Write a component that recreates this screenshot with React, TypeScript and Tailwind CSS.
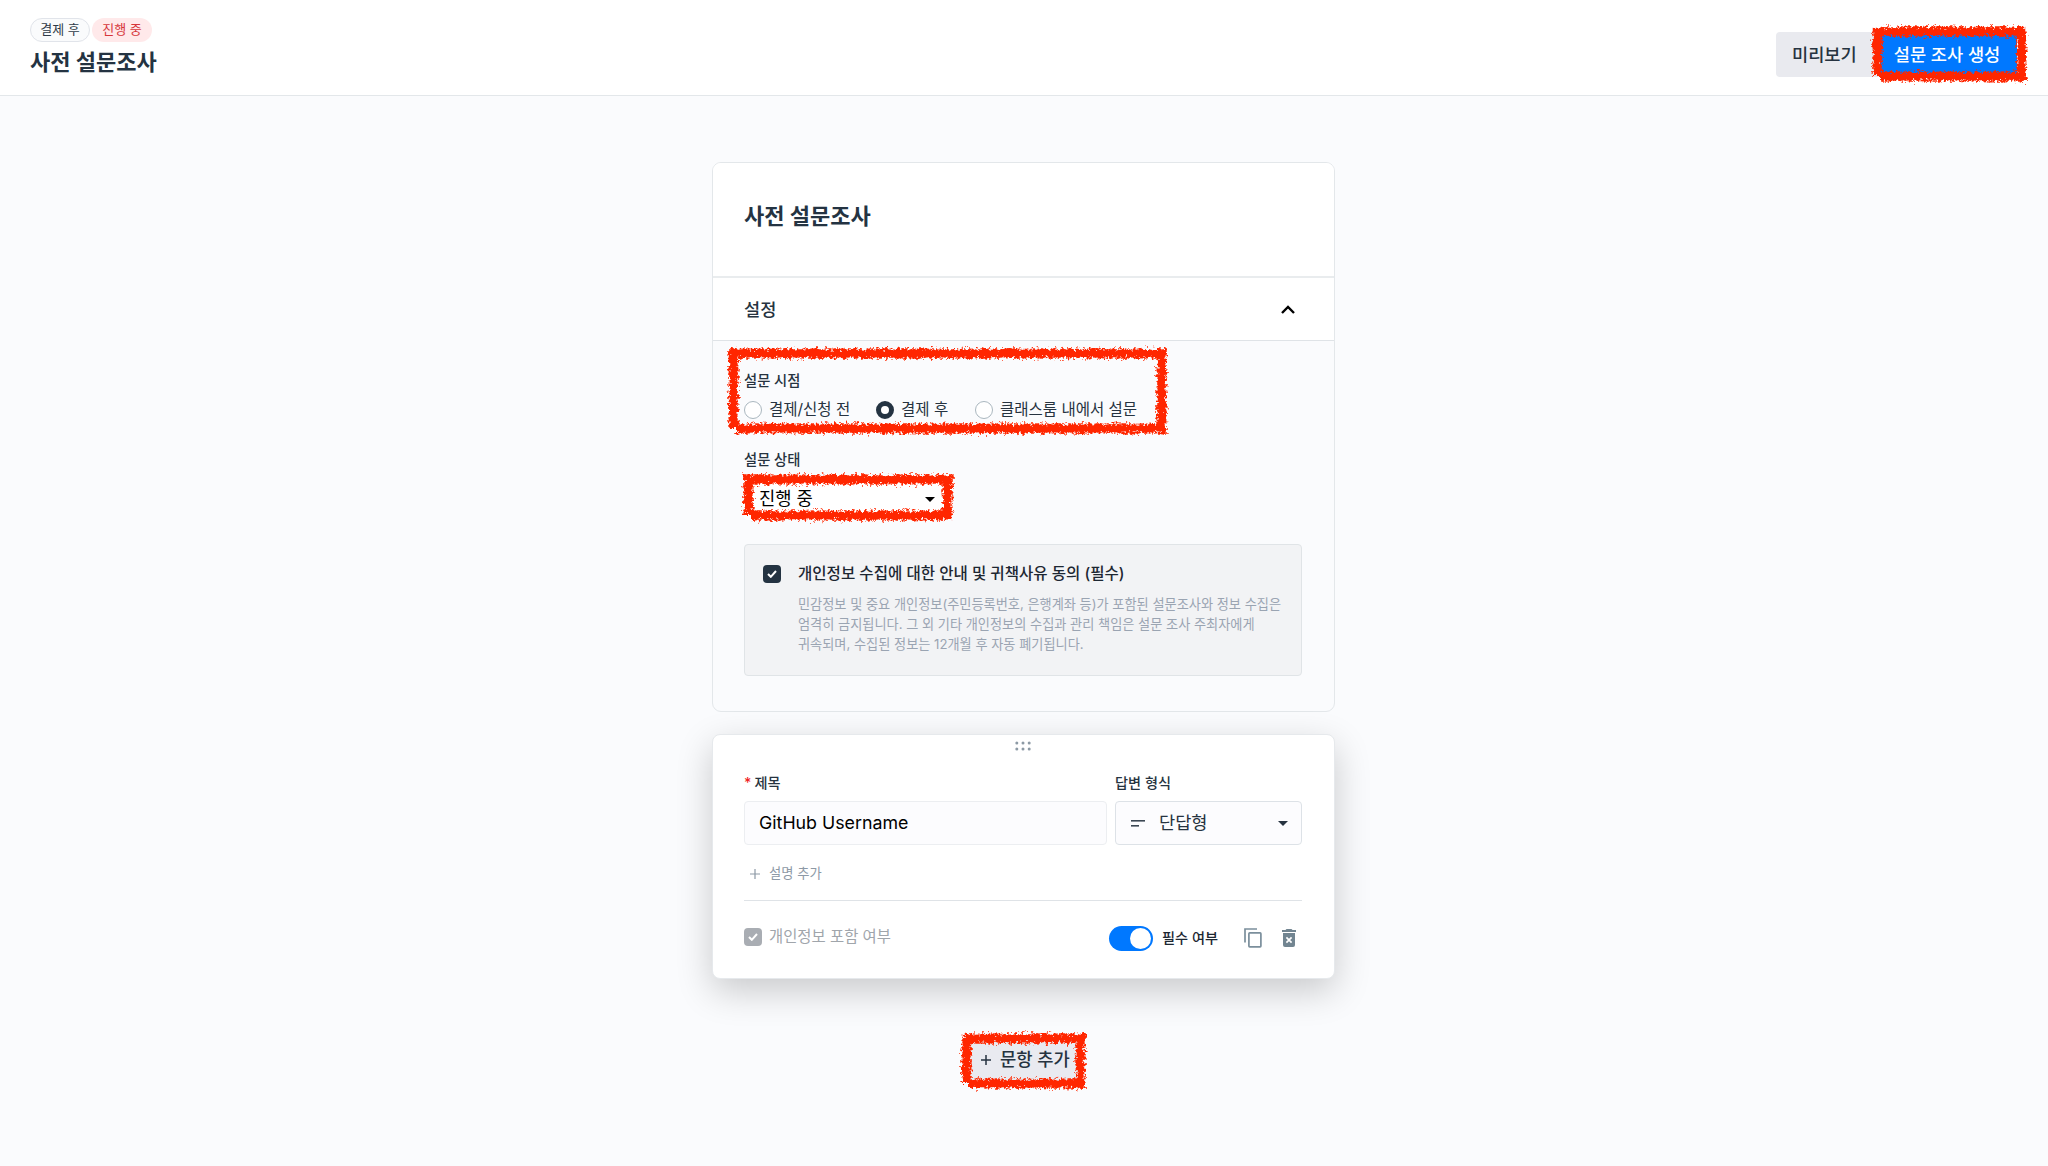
import type { ReactNode } from "react";
import clsx from "clsx";

type MarkerFrameProps = {
  width: number;
  height: number;
  seed: number;
  className: string;
};

// Hand-drawn red marker outline around a highlighted control
function MarkerFrame({ width, height, seed, className }: MarkerFrameProps) {
  const id = `marker-${seed}`;
  const r = width - 5.5;
  const b = height - 5.5;
  return (
    <svg
      width={width}
      height={height}
      viewBox={`0 0 ${width} ${height}`}
      className={clsx("pointer-events-none absolute max-w-none overflow-visible", className)}
      fill="none"
    >
      <filter id={id} x="-20" y="-20" width={width + 40} height={height + 40} filterUnits="userSpaceOnUse">
        <feTurbulence type="fractalNoise" baseFrequency="0.33" numOctaves="3" seed={seed} result="noise" />
        <feDisplacementMap in="SourceGraphic" in2="noise" scale="8" xChannelSelector="R" yChannelSelector="G" />
      </filter>
      <g filter={`url(#${id})`} stroke="#ff2600">
        <path d={`M5.5 ${height - 6}V5.5H${r}V${b}H8`} strokeWidth="7.5" />
        <path d={`M5.5 ${height - 6}V5.5H${r}V${b}H8`} strokeWidth="10.5" strokeDasharray="1.6 1.3 2.4 1.1" />
      </g>
    </svg>
  );
}

function Caret({ className }: { className?: string }) {
  return (
    <svg width="10" height="5" viewBox="0 0 10 5" className={className} fill="currentColor">
      <path d="M0 0h10L5 5z" />
    </svg>
  );
}

function Radio({ checked, children }: { checked?: boolean; children: ReactNode }) {
  return (
    <label className="flex h-5 items-center gap-[7px] whitespace-nowrap text-[15.5px] text-[#263340]">
      <span
        className={clsx(
          "h-[18px] w-[18px] shrink-0 rounded-full bg-white",
          checked ? "border-[5px] border-[#243342]" : "border-[1.5px] border-[#aab7bf]"
        )}
      />
      {children}
    </label>
  );
}

function Checkbox({ className }: { className: string }) {
  return (
    <span className={clsx("flex h-[18px] w-[18px] shrink-0 items-center justify-center rounded-[4px]", className)}>
      <svg width="10" height="8" viewBox="0 0 10 8" fill="none" stroke="white" strokeWidth="2">
        <path d="M1 4l2.8 2.8L9 1" />
      </svg>
    </span>
  );
}

function Header() {
  return (
    <header className="flex h-[96px] items-start justify-between border-b border-[#e3e7ea] bg-white pl-[30px] pr-[31px]">
      <div className="pt-[18px]">
        <div className="flex gap-[2px] text-[13px]">
          <span className="flex h-6 w-[60px] items-center justify-center rounded-full border border-[#e1e4ea] bg-[#fafbfc] text-[#2f3b48]">
            결제 후
          </span>
          <span className="flex h-6 w-[60px] items-center justify-center rounded-full bg-[#ffe9ea] text-[#d6363a]">
            진행 중
          </span>
        </div>
        <h1 className="mt-1 text-[22px] font-bold leading-[32px] text-[#243342]">사전 설문조사</h1>
      </div>
      <div className="flex pt-8 text-[17.6px] font-medium">
        <button className="h-[45px] w-[104px] rounded-l-[4px] bg-[#e9eaef] pl-[16px] pt-[1px] text-left text-[#263340]">
          미리보기
        </button>
        <div className="relative">
          <button className="h-[45px] w-[137px] bg-[#0078ff] pr-[3px] pt-[1px] text-white">설문 조사 생성</button>
          <MarkerFrame width={155} height={56} seed={3} className="-left-[8px] -top-[6px]" />
        </div>
      </div>
    </header>
  );
}

function SettingsCard() {
  return (
    <section className="w-[623px] rounded-[9px] border border-[#e3e7ea] bg-[#fafbfd]">
      <div className="h-[115px] rounded-t-[8px] border-b-2 border-[#e9ecee] bg-white px-[31px] pt-[37px]">
        <h2 className="text-[22px] font-bold leading-[32px] text-[#243342]">사전 설문조사</h2>
      </div>
      <div className="flex h-[63px] items-center justify-between border-b border-[#dfe3e7] bg-white pl-[31px] pr-[39px]">
        <h3 className="pt-[2px] text-[17.6px] font-medium text-[#263340]">설정</h3>
        <svg width="14" height="9" viewBox="0 0 14 9" fill="none" stroke="black" strokeWidth="2.4">
          <path d="M1 8l6-6 6 6" />
        </svg>
      </div>

      <div className="pb-[35px] pl-[31px] pr-8 pt-[30px]">
        <div className="relative">
          <p className="text-[14.3px] font-medium leading-5 text-[#263340]">설문 시점</p>
          <div className="mt-[9px] flex">
            <div className="w-[132px]">
              <Radio>결제/신청 전</Radio>
            </div>
            <div className="w-[99px]">
              <Radio checked>결제 후</Radio>
            </div>
            <Radio>클래스룸 내에서 설문</Radio>
          </div>
          <MarkerFrame width={439} height={86} seed={7} className="-left-[16px] -top-[23px]" />
        </div>

        <p className="mt-[30px] text-[14.3px] font-medium leading-5 text-[#263340]">설문 상태</p>
        <div className="relative mt-[7px] flex h-[43px] w-[208px] items-center justify-between rounded-[4px] bg-white pl-[15px] pr-[17px] pt-[2px] text-[17.7px] text-black">
          진행 중
          <Caret />
          <MarkerFrame width={210} height={47} seed={11} className="-left-[1px] -top-[3px]" />
        </div>

        <div className="mt-[24px] flex h-[132px] gap-[17px] rounded-[4px] border border-[#e0e4e7] bg-[#f2f3f5] pl-[18px] pt-[17px]">
          <Checkbox className="mt-[3px] bg-[#243342]" />
          <div>
            <p className="text-[15.55px] font-medium leading-[24px] text-[#1d2732]">
              개인정보 수집에 대한 안내 및 귀책사유 동의 (필수)
            </p>
            <p className="mt-[8px] whitespace-nowrap text-[13.18px] leading-5 text-[#9aa4b2]">
              민감정보 및 중요 개인정보(주민등록번호, 은행계좌 등)가 포함된 설문조사와 정보 수집은
              <br />
              엄격히 금지됩니다. 그 외 기타 개인정보의 수집과 관리 책임은 설문 조사 주최자에게
              <br />
              귀속되며, 수집된 정보는 12개월 후 자동 폐기됩니다.
            </p>
          </div>
        </div>
      </div>
    </section>
  );
}

function QuestionCard() {
  return (
    <section className="mt-[22px] h-[245px] w-[623px] rounded-[8px] border border-[#e6e9ec] bg-white pl-[31px] pr-8 shadow-[0_12px_36px_rgba(0,0,0,0.2)]">
      <div className="flex justify-center pt-[6px]">
        <svg width="16" height="10" viewBox="0 0 16 10" fill="#8d9aa5">
          <circle cx="1.8" cy="2" r="1.5" />
          <circle cx="8" cy="2" r="1.5" />
          <circle cx="14.2" cy="2" r="1.5" />
          <circle cx="1.8" cy="8" r="1.5" />
          <circle cx="8" cy="8" r="1.5" />
          <circle cx="14.2" cy="8" r="1.5" />
        </svg>
      </div>

      <div className="mt-[22px] flex gap-[8px] text-[14.2px] font-medium leading-5 text-[#263340]">
        <div className="w-[363px]">
          <p className="flex gap-[3px]">
            <span className="text-[#f02020]">*</span>제목
          </p>
          <div className="mt-[8px] flex h-[44px] items-center rounded-[4px] border border-[#eceef1] bg-[#fcfcfe] pl-[14px] text-[17.8px] font-normal text-black">
            GitHub Username
          </div>
        </div>
        <div className="w-[187px]">
          <p>답변 형식</p>
          <div className="mt-[8px] flex h-[44px] items-center rounded-[4px] border border-[#dde2e7] bg-[#fcfcfe] pl-[15px] pr-[13px] text-[17.6px] font-normal">
            <svg width="14" height="7" viewBox="0 0 14 7" fill="#3b4753">
              <rect width="14" height="1.6" />
              <rect y="5" width="8" height="1.6" />
            </svg>
            <span className="ml-[14px] flex-1">단답형</span>
            <Caret />
          </div>
        </div>
      </div>

      <div className="mt-[19px] flex h-5 items-center gap-[9px] pl-[6px] text-[13.3px] text-[#8d99a6]">
        <svg width="10" height="10" viewBox="0 0 10 10" stroke="currentColor" strokeWidth="1.2">
          <path d="M0 5h10M5 0v10" />
        </svg>
        설명 추가
      </div>

      <div className="mt-[16px] flex h-[75px] items-center border-t border-[#dfe3e7] text-[#a0a5ab]">
        <Checkbox className="mb-[2px] bg-[#a9adb3]" />
        <span className="mb-[3px] ml-[7px] text-[15.4px]">개인정보 포함 여부</span>
        <span className="ml-auto flex h-[25px] w-[44px] items-center justify-end rounded-full bg-[#0078ff] pr-[2px]">
          <span className="h-[21px] w-[21px] rounded-full bg-white" />
        </span>
        <span className="ml-[9px] text-[14.2px] font-medium text-[#1d2732]">필수 여부</span>
        <svg className="ml-[26px]" width="18" height="20" viewBox="0 0 18 20" fill="none" stroke="#7b8f9c" strokeWidth="1.7">
          <path d="M1 14.5V1h12" />
          <rect x="4.9" y="4.9" width="12" height="14" rx="0.8" />
        </svg>
        <svg className="ml-[20px] mr-[6px]" width="14" height="18" viewBox="0 0 14 18">
          <path d="M0 1h3.5l1-1h5l1 1H14v2H0z" fill="#728591" />
          <path d="M1 4h12v12a2 2 0 0 1-2 2H3a2 2 0 0 1-2-2z" fill="#728591" />
          <path d="M4.4 8.4l5.2 5.2M9.6 8.4l-5.2 5.2" stroke="white" strokeWidth="1.7" />
        </svg>
      </div>
    </section>
  );
}

export default function App() {
  return (
    <div className="h-[1166px] w-[2048px] overflow-hidden bg-[#fafbfd] font-['Inter','Noto_Sans_CJK_KR',sans-serif]">
      <Header />
      <main className="flex flex-col items-center pr-[1px] pt-[66px]">
        <SettingsCard />
        <QuestionCard />
        <div className="relative mt-[58px]">
          <button className="flex h-[46px] w-[117px] items-center gap-[9px] bg-[#e9eaf0] pl-[16px] text-[17.7px] font-medium text-[#263340]">
            <svg width="10" height="10" viewBox="0 0 10 10" stroke="currentColor" strokeWidth="1.5">
              <path d="M0 5h10M5 0v10" />
            </svg>
            문항 추가
          </button>
          <MarkerFrame width={125} height={56} seed={5} className="-left-[4px] -top-[4px]" />
        </div>
      </main>
    </div>
  );
}
